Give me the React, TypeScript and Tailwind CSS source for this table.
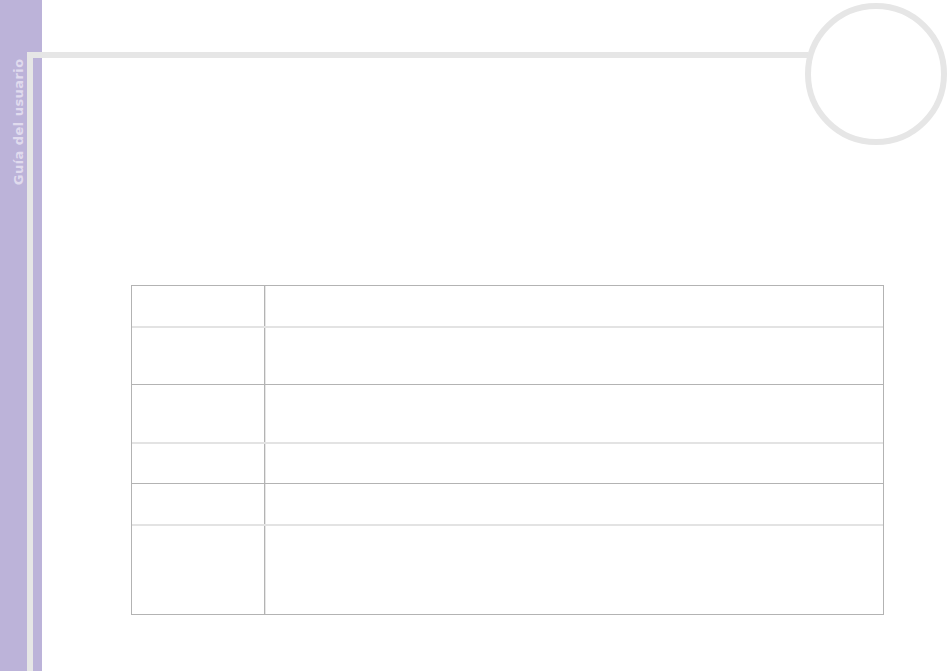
const rows = [
  { h: "h-[42px]", line: "border-b-2 border-[#e3e3e3]" },
  { h: "h-[57px]", line: "border-b border-[#b3b3b3]" },
  { h: "h-[59px]", line: "border-b-2 border-[#e3e3e3]" },
  { h: "h-[40px]", line: "border-b border-[#b3b3b3]" },
  { h: "h-[42px]", line: "border-b-2 border-[#e3e3e3]" },
  { h: "h-[88px]", line: "" },
];

const App = () => {
  return (
    <div className="relative w-[950px] h-[671px] bg-white overflow-hidden flex">
      <aside className="w-[42px] h-full bg-[#bcb3d9] shrink-0 flex justify-start">
        <div className="w-[27px] h-[200px] flex items-center justify-center">
          <span
            className="block -rotate-90 whitespace-nowrap text-[13px] font-bold text-[#e0dbee] tracking-[0.45px] translate-y-[22px] translate-x-[5px]"
            style={{ fontFamily: '"DejaVu Sans", Verdana, sans-serif' }}
          >
            Guía del usuario
          </span>
        </div>
      </aside>

      {/* page frame decoration */}
      <div className="absolute left-[27px] top-[52px] w-[781px] h-[6px] bg-[#e6e6e6]" />
      <div className="absolute left-[27px] top-[52px] w-[6px] h-[619px] bg-[#e6e6e6]" />
      <div className="absolute left-[805px] top-[3px] w-[142px] h-[142px] rounded-full border-[6px] border-[#e6e6e6] bg-white" />

      <main className="flex-1 pl-[89px] pt-[285px]">
        <div className="w-[753px] border border-[#b3b3b3]">
          {rows.map((r, i) => (
            <div key={i} className={`flex ${r.h} ${r.line}`}>
              <div className="w-[133px] border-r border-[#b3b3b3]" />
              <div className="flex-1 border-l border-[#e6e6e6]" />
            </div>
          ))}
        </div>
      </main>
    </div>
  );
};

export default App;
